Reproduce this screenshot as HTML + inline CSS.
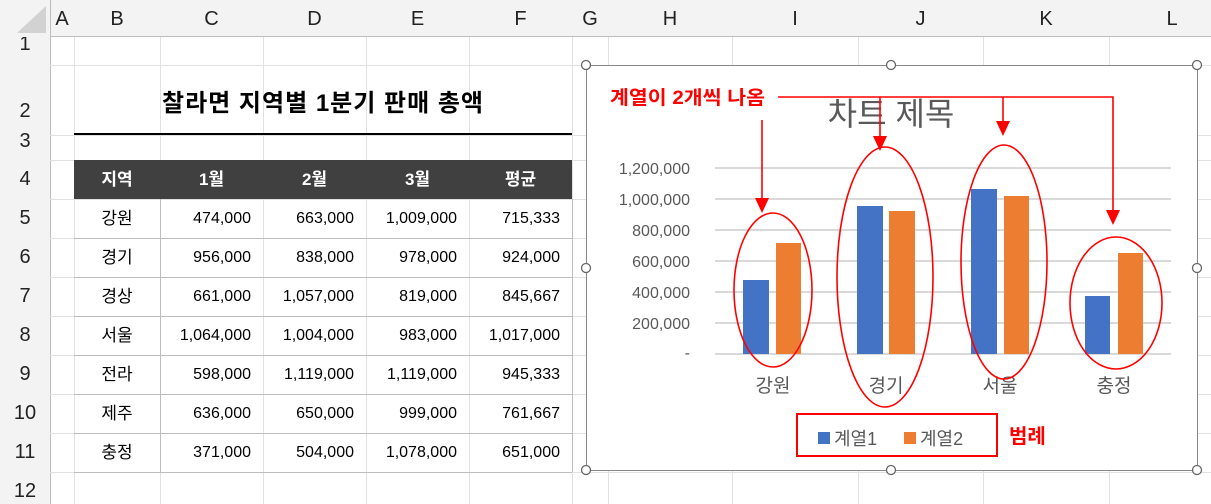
<!DOCTYPE html>
<html><head><meta charset="utf-8"><style>
body{margin:0;width:1211px;height:504px;overflow:hidden;background:#fff;font-family:"Liberation Sans","Noto Sans CJK KR",sans-serif;position:relative}
.a{position:absolute}
.ch{position:absolute;top:0;height:36px;line-height:38px;text-align:center;font-size:20px;color:#222}
.rh{position:absolute;left:0;width:50px;text-align:center;font-size:20px;color:#222}
.t{position:absolute;font-size:16px;color:#000;height:39px;line-height:39px}
</style></head><body>
<div class="a" style="left:0;top:0;width:1211px;height:36px;background:#f3f3f3;border-bottom:1px solid #bdbdbd"></div>
<div class="a" style="left:0;top:0;width:50px;height:504px;background:#f3f3f3;border-right:1px solid #bdbdbd"></div>
<svg class="a" style="left:14px;top:4px" width="34" height="30"><polygon points="32,2 32,29 3,29" fill="#d2d2d2"/></svg>
<svg class="a" style="left:0;top:0" width="1211" height="504">
<g stroke="#e1e1e1" stroke-width="1">
<line x1="74.5" y1="36" x2="74.5" y2="504"/><line x1="160.5" y1="36" x2="160.5" y2="504"/><line x1="263.5" y1="36" x2="263.5" y2="504"/><line x1="366.5" y1="36" x2="366.5" y2="504"/><line x1="469.5" y1="36" x2="469.5" y2="504"/><line x1="572.5" y1="36" x2="572.5" y2="504"/><line x1="608.5" y1="36" x2="608.5" y2="504"/><line x1="732.5" y1="36" x2="732.5" y2="504"/><line x1="858.5" y1="36" x2="858.5" y2="504"/><line x1="983.5" y1="36" x2="983.5" y2="504"/><line x1="1109.5" y1="36" x2="1109.5" y2="504"/>
<line x1="50" y1="65.5" x2="1211" y2="65.5"/><line x1="50" y1="135.5" x2="1211" y2="135.5"/><line x1="50" y1="160.5" x2="1211" y2="160.5"/><line x1="50" y1="199.5" x2="1211" y2="199.5"/><line x1="50" y1="238.5" x2="1211" y2="238.5"/><line x1="50" y1="277.5" x2="1211" y2="277.5"/><line x1="50" y1="316.5" x2="1211" y2="316.5"/><line x1="50" y1="355.5" x2="1211" y2="355.5"/><line x1="50" y1="394.5" x2="1211" y2="394.5"/><line x1="50" y1="433.5" x2="1211" y2="433.5"/><line x1="50" y1="472.5" x2="1211" y2="472.5"/>
</g>
<g stroke="#bdbdbd"><line x1="50" y1="36.5" x2="1211" y2="36.5"/>
<line x1="74" y1="238.5" x2="572" y2="238.5"/><line x1="74" y1="277.5" x2="572" y2="277.5"/><line x1="74" y1="316.5" x2="572" y2="316.5"/><line x1="74" y1="355.5" x2="572" y2="355.5"/><line x1="74" y1="394.5" x2="572" y2="394.5"/><line x1="74" y1="433.5" x2="572" y2="433.5"/><line x1="74" y1="472.5" x2="572" y2="472.5"/><line x1="160.5" y1="199" x2="160.5" y2="472"/><line x1="572.5" y1="199" x2="572.5" y2="472"/></g>
<line x1="74" y1="134" x2="572" y2="134" stroke="#000" stroke-width="2"/>
<rect x="74" y="160" width="498" height="39" fill="#404040"/>
</svg>
<div class="ch" style="left:50px;width:24px">A</div><div class="ch" style="left:74px;width:86px">B</div><div class="ch" style="left:160px;width:103px">C</div><div class="ch" style="left:263px;width:103px">D</div><div class="ch" style="left:366px;width:103px">E</div><div class="ch" style="left:469px;width:103px">F</div><div class="ch" style="left:572px;width:36px">G</div><div class="ch" style="left:608px;width:124px">H</div><div class="ch" style="left:732px;width:126px">I</div><div class="ch" style="left:858px;width:125px">J</div><div class="ch" style="left:983px;width:126px">K</div><div class="ch" style="left:1109px;width:126px">L</div>
<div class="rh" style="top:37px;height:28px;overflow:hidden"><div style="margin-top:-4px">1</div></div>
<div class="rh" style="top:100px">2</div><div class="rh" style="top:130px;height:25px;overflow:hidden">3</div>
<div class="rh" style="top:168px">4</div><div class="rh" style="top:207px">5</div><div class="rh" style="top:246px">6</div><div class="rh" style="top:285px">7</div><div class="rh" style="top:324px">8</div><div class="rh" style="top:363px">9</div><div class="rh" style="top:402px">10</div><div class="rh" style="top:441px">11</div><div class="rh" style="top:480px">12</div>
<div class="a" style="left:74px;width:498px;top:83px;text-align:center;font-size:24px;font-weight:bold;letter-spacing:1px">찰라면 지역별 1분기 판매 총액</div>
<div style="position:absolute;left:74px;top:160px;color:#fff;font-weight:bold;font-size:17px;line-height:39px">
<span class="a" style="left:0;width:86px;text-align:center">지역</span><span class="a" style="left:86px;width:103px;text-align:center">1월</span><span class="a" style="left:189px;width:103px;text-align:center">2월</span><span class="a" style="left:292px;width:103px;text-align:center">3월</span><span class="a" style="left:395px;width:103px;text-align:center">평균</span></div>
<div style="position:absolute;left:74px;top:199px">
<div class="t" style="top:0;width:86px;text-align:center;font-size:17px">강원</div><div class="t" style="top:0;left:86px;width:91px;text-align:right">474,000</div><div class="t" style="top:0;left:189px;width:91px;text-align:right">663,000</div><div class="t" style="top:0;left:292px;width:91px;text-align:right">1,009,000</div><div class="t" style="top:0;left:395px;width:91px;text-align:right">715,333</div>
<div class="t" style="top:39px;width:86px;text-align:center;font-size:17px">경기</div><div class="t" style="top:39px;left:86px;width:91px;text-align:right">956,000</div><div class="t" style="top:39px;left:189px;width:91px;text-align:right">838,000</div><div class="t" style="top:39px;left:292px;width:91px;text-align:right">978,000</div><div class="t" style="top:39px;left:395px;width:91px;text-align:right">924,000</div>
<div class="t" style="top:78px;width:86px;text-align:center;font-size:17px">경상</div><div class="t" style="top:78px;left:86px;width:91px;text-align:right">661,000</div><div class="t" style="top:78px;left:189px;width:91px;text-align:right">1,057,000</div><div class="t" style="top:78px;left:292px;width:91px;text-align:right">819,000</div><div class="t" style="top:78px;left:395px;width:91px;text-align:right">845,667</div>
<div class="t" style="top:117px;width:86px;text-align:center;font-size:17px">서울</div><div class="t" style="top:117px;left:86px;width:91px;text-align:right">1,064,000</div><div class="t" style="top:117px;left:189px;width:91px;text-align:right">1,004,000</div><div class="t" style="top:117px;left:292px;width:91px;text-align:right">983,000</div><div class="t" style="top:117px;left:395px;width:91px;text-align:right">1,017,000</div>
<div class="t" style="top:156px;width:86px;text-align:center;font-size:17px">전라</div><div class="t" style="top:156px;left:86px;width:91px;text-align:right">598,000</div><div class="t" style="top:156px;left:189px;width:91px;text-align:right">1,119,000</div><div class="t" style="top:156px;left:292px;width:91px;text-align:right">1,119,000</div><div class="t" style="top:156px;left:395px;width:91px;text-align:right">945,333</div>
<div class="t" style="top:195px;width:86px;text-align:center;font-size:17px">제주</div><div class="t" style="top:195px;left:86px;width:91px;text-align:right">636,000</div><div class="t" style="top:195px;left:189px;width:91px;text-align:right">650,000</div><div class="t" style="top:195px;left:292px;width:91px;text-align:right">999,000</div><div class="t" style="top:195px;left:395px;width:91px;text-align:right">761,667</div>
<div class="t" style="top:234px;width:86px;text-align:center;font-size:17px">충정</div><div class="t" style="top:234px;left:86px;width:91px;text-align:right">371,000</div><div class="t" style="top:234px;left:189px;width:91px;text-align:right">504,000</div><div class="t" style="top:234px;left:292px;width:91px;text-align:right">1,078,000</div><div class="t" style="top:234px;left:395px;width:91px;text-align:right">651,000</div>
</div>
<svg class="a" style="left:0;top:0" width="1211" height="504" font-family="Liberation Sans, Noto Sans CJK KR, sans-serif">
<rect x="586.5" y="65.5" width="611" height="405" fill="#fff" stroke="#888"/>
<g fill="#fff" stroke="#666" stroke-width="1.3">
<circle cx="586" cy="65" r="4.5"/><circle cx="891" cy="65" r="4.5"/><circle cx="1197" cy="65" r="4.5"/><circle cx="586" cy="268" r="4.5"/><circle cx="1197" cy="268" r="4.5"/><circle cx="586" cy="470" r="4.5"/><circle cx="891" cy="470" r="4.5"/><circle cx="1197" cy="470" r="4.5"/></g>
<g stroke="#d9d9d9" stroke-width="2"><line x1="715" y1="168" x2="1171" y2="168"/><line x1="715" y1="199" x2="1171" y2="199"/><line x1="715" y1="230" x2="1171" y2="230"/><line x1="715" y1="261" x2="1171" y2="261"/><line x1="715" y1="292" x2="1171" y2="292"/><line x1="715" y1="323" x2="1171" y2="323"/><line x1="715" y1="354" x2="1171" y2="354"/></g>
<g fill="#595959" font-size="16" text-anchor="end"><text x="690" y="174">1,200,000</text><text x="690" y="205">1,000,000</text><text x="690" y="236">800,000</text><text x="690" y="267">600,000</text><text x="690" y="298">400,000</text><text x="690" y="329">200,000</text><text x="690" y="358">-</text></g>
<g fill="#4472c4"><rect x="743" y="280" width="26" height="74"/><rect x="857" y="206" width="26" height="148"/><rect x="971" y="189" width="26" height="165"/><rect x="1085" y="296" width="25" height="58"/></g>
<g fill="#ed7d31"><rect x="776" y="243" width="25" height="111"/><rect x="889" y="211" width="26" height="143"/><rect x="1004" y="196" width="25" height="158"/><rect x="1118" y="253" width="25" height="101"/></g>
<g fill="#595959" font-size="19" text-anchor="middle"><text x="773" y="392">강원</text><text x="886" y="392">경기</text><text x="1000" y="392">서울</text><text x="1114" y="392">충정</text></g>
<text x="891" y="125" fill="#595959" font-size="32" text-anchor="middle">차트 제목</text>
<g fill="none" stroke="#f00" stroke-width="1.6"><ellipse cx="773" cy="290" rx="39" ry="77"/><ellipse cx="885" cy="277" rx="48" ry="130"/><ellipse cx="1004" cy="262" rx="43" ry="117"/><ellipse cx="1116" cy="303" rx="46" ry="66"/>
<polyline points="778,97 1113,97 1113,212"/><line x1="762" y1="120" x2="762" y2="200"/><line x1="880" y1="97" x2="880" y2="138"/><line x1="1003" y1="97" x2="1003" y2="122"/>
<rect x="797" y="414" width="200" height="42" stroke-width="2"/></g>
<g fill="#f00"><polygon points="755,198 769,198 762,213"/><polygon points="873,136 887,136 880,151"/><polygon points="996,121 1010,121 1003,136"/><polygon points="1106,210 1120,210 1113,225"/></g>
<text x="610" y="104" fill="#f00" font-size="19" font-weight="bold" textLength="155" lengthAdjust="spacingAndGlyphs">계열이 2개씩 나옴</text>
<rect x="818" y="432" width="12" height="12" fill="#4472c4"/><text x="834" y="445" fill="#595959" font-size="18">계열1</text>
<rect x="904" y="432" width="12" height="12" fill="#ed7d31"/><text x="920" y="445" fill="#595959" font-size="18">계열2</text>
<text x="1009" y="443" fill="#f00" font-size="20" font-weight="bold">범례</text>
</svg>
</body></html>
